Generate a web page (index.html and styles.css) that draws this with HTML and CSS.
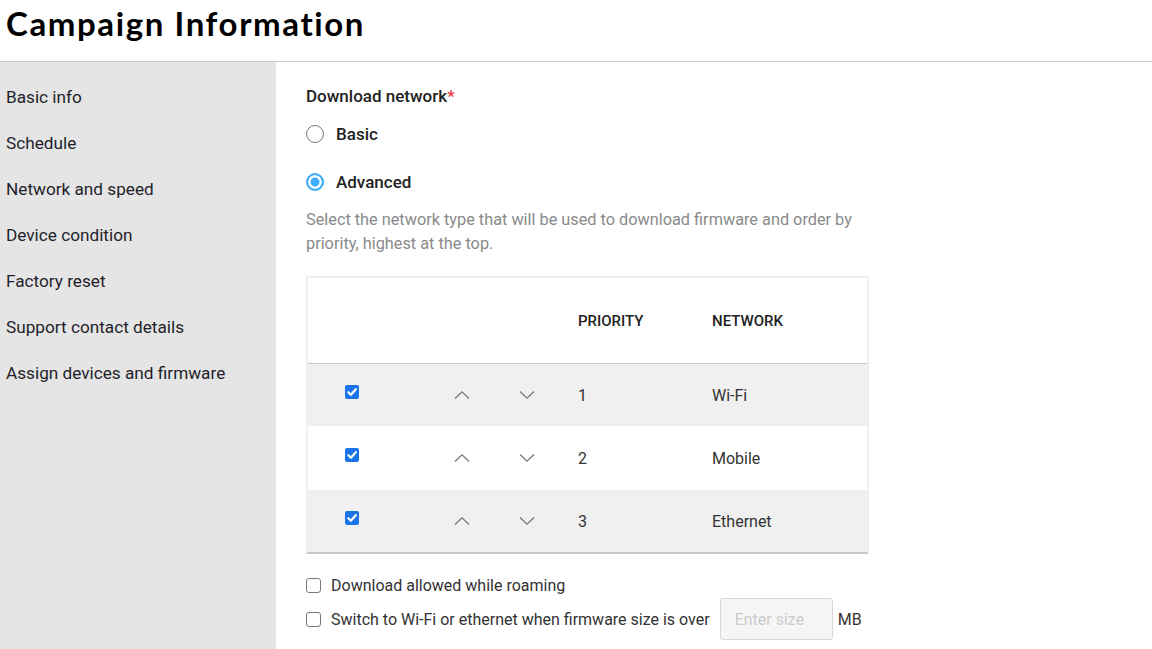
FILE: index.html
```html
<!DOCTYPE html>
<html lang="en">
<head>
<meta charset="utf-8">
<title>Campaign Information</title>
<link rel="stylesheet" href="styles.css">
</head>
<body>
<header class="page-header">
  <h1 class="page-title">Campaign Information</h1>
</header>
<div class="layout">
  <nav class="sidebar">
    <ul class="nav-list">
      <li class="nav-item">Basic info</li>
      <li class="nav-item">Schedule</li>
      <li class="nav-item">Network and speed</li>
      <li class="nav-item">Device condition</li>
      <li class="nav-item">Factory reset</li>
      <li class="nav-item">Support contact details</li>
      <li class="nav-item">Assign devices and firmware</li>
    </ul>
  </nav>
  <main class="content">
    <div class="field-label">Download network<span class="required">*</span></div>
    <div class="radio-group">
      <label class="radio-row"><span class="radio"></span><span class="radio-text">Basic</span></label>
      <label class="radio-row"><span class="radio radio-checked"></span><span class="radio-text">Advanced</span></label>
    </div>
    <p class="description">Select the network type that will be used to download firmware and order by priority, highest at the top.</p>

    <div class="net-table">
      <div class="net-row net-head">
        <div class="cell cell-check"></div>
        <div class="cell cell-arrows"></div>
        <div class="cell cell-priority">PRIORITY</div>
        <div class="cell cell-network">NETWORK</div>
      </div>
      <div class="net-row row-grey">
        <div class="cell cell-check"><span class="cb-on"><svg viewBox="0 0 14 14" width="14" height="14"><path d="M3.3 7.2 L5.9 9.8 L10.8 4.2" fill="none" stroke="#fff" stroke-width="2.2" stroke-linecap="round" stroke-linejoin="round"/></svg></span></div>
        <div class="cell cell-arrows">
          <svg class="arrow" viewBox="0 0 16 10" width="16" height="10"><path d="M1 8.5 L8 1.8 L15 8.5" fill="none" stroke="#777" stroke-width="1.3"/></svg>
          <svg class="arrow" viewBox="0 0 16 10" width="16" height="10"><path d="M1 1.5 L8 8.2 L15 1.5" fill="none" stroke="#777" stroke-width="1.3"/></svg>
        </div>
        <div class="cell cell-priority num">1</div>
        <div class="cell cell-network">Wi-Fi</div>
      </div>
      <div class="net-row row-white">
        <div class="cell cell-check"><span class="cb-on"><svg viewBox="0 0 14 14" width="14" height="14"><path d="M3.3 7.2 L5.9 9.8 L10.8 4.2" fill="none" stroke="#fff" stroke-width="2.2" stroke-linecap="round" stroke-linejoin="round"/></svg></span></div>
        <div class="cell cell-arrows">
          <svg class="arrow" viewBox="0 0 16 10" width="16" height="10"><path d="M1 8.5 L8 1.8 L15 8.5" fill="none" stroke="#777" stroke-width="1.3"/></svg>
          <svg class="arrow" viewBox="0 0 16 10" width="16" height="10"><path d="M1 1.5 L8 8.2 L15 1.5" fill="none" stroke="#777" stroke-width="1.3"/></svg>
        </div>
        <div class="cell cell-priority num">2</div>
        <div class="cell cell-network">Mobile</div>
      </div>
      <div class="net-row row-grey">
        <div class="cell cell-check"><span class="cb-on"><svg viewBox="0 0 14 14" width="14" height="14"><path d="M3.3 7.2 L5.9 9.8 L10.8 4.2" fill="none" stroke="#fff" stroke-width="2.2" stroke-linecap="round" stroke-linejoin="round"/></svg></span></div>
        <div class="cell cell-arrows">
          <svg class="arrow" viewBox="0 0 16 10" width="16" height="10"><path d="M1 8.5 L8 1.8 L15 8.5" fill="none" stroke="#777" stroke-width="1.3"/></svg>
          <svg class="arrow" viewBox="0 0 16 10" width="16" height="10"><path d="M1 1.5 L8 8.2 L15 1.5" fill="none" stroke="#777" stroke-width="1.3"/></svg>
        </div>
        <div class="cell cell-priority num">3</div>
        <div class="cell cell-network">Ethernet</div>
      </div>
    </div>

    <div class="options">
      <label class="option-row"><span class="cb-off"></span><span>Download allowed while roaming</span></label>
      <label class="option-row"><span class="cb-off"></span><span>Switch to Wi-Fi or ethernet when firmware size is over</span><span class="size-input">Enter size</span><span class="unit">MB</span></label>
    </div>
  </main>
</div>
</body>
</html>
```

FILE: styles.css
```css
* { box-sizing: border-box; }
html, body { margin: 0; padding: 0; }
body {
  font-family: Roboto, "Liberation Sans", sans-serif;
  color: #222;
  background: #fff;
  width: 1152px;
  height: 649px;
  overflow: hidden;
}
.page-header {
  height: 62px;
  border-bottom: 1px solid #c8c8c8;
  padding: 0 0 0 6px;
  display: flex;
  align-items: center;
}
.page-title {
  margin: 0;
  font-family: Lato, "Liberation Sans", sans-serif;
  font-weight: 700;
  font-size: 33px;
  color: #000;
  letter-spacing: 1.6px;
  position: relative;
  top: -8px;
}
.layout {
  display: flex;
  height: 587px;
}
.sidebar {
  width: 276px;
  background: #e5e5e5;
  flex: none;
}
.nav-list {
  list-style: none;
  margin: 0;
  padding: 12px 0 0 6px;
}
.nav-item {
  height: 46px;
  line-height: 46px;
  font-size: 17.2px;
  color: #1f1f2a;
}
.content {
  padding: 22px 0 0 30px;
  flex: 1;
}
.field-label {
  font-size: 17px;
  font-weight: 500;
  color: #222;
  line-height: 24px;
}
.required { color: #e8383c; }
.radio-group {
  display: flex;
  flex-direction: column;
  margin-top: 2px;
}
.radio-row {
  display: flex;
  align-items: center;
  height: 48px;
}
.radio {
  width: 18px;
  height: 18px;
  border: 1.5px solid #777;
  border-radius: 50%;
  margin-right: 12px;
  background: #fff;
}
.radio-checked {
  border: 2px solid #3daeff;
  box-shadow: inset 0 0 0 2.5px #fff;
  background: #3daeff;
}
.radio-text {
  font-size: 17px;
  font-weight: 500;
  color: #222;
}
.description {
  margin: 2px 0 0;
  width: 570px;
  font-size: 16.3px;
  line-height: 24px;
  color: #8a8a8a;
}
.net-table {
  margin-top: 20px;
  width: 563px;
  border: 2px solid #f0f0f0;
  border-bottom: 2px solid #c8c8c8;
}
.net-row {
  display: grid;
  grid-template-columns: 88px 182px 134px 1fr;
  align-items: center;
  font-size: 16px;
  color: #333;
}
.net-head {
  height: 86px;
  border-bottom: 1px solid #c8c8c8;
  font-size: 15px;
  font-weight: 500;
  color: #222;
  background: #fff;
}
.row-grey { background: #f0f0f0; height: 62px; }
.row-white { background: #fff; height: 64px; }
.cell { display: flex; align-items: center; }
.cell-check { justify-content: center; margin-top: -6px; }
.cell-arrows { padding-left: 58px; gap: 49px; }
.arrow { display: block; }
.cb-on {
  width: 14px;
  height: 14px;
  border-radius: 2px;
  background: #1a73e8;
  display: block;
}
.cb-on svg { display: block; }
.options {
  margin-top: 20px;
  display: flex;
  flex-direction: column;
}
.option-row {
  display: flex;
  align-items: center;
  font-size: 16px;
  color: #333;
}
.option-row:first-child { height: 22px; margin-bottom: 2px; }
.option-row:last-child { height: 42px; }
.cb-off {
  width: 15px;
  height: 15px;
  border: 1px solid #777;
  border-radius: 3px;
  background: #fff;
  margin-right: 10px;
  flex: none;
}
.size-input {
  width: 113px;
  height: 42px;
  margin-left: 10px;
  border: 1px solid #d8d8d8;
  border-radius: 3px;
  background: #f5f5f5;
  color: #ccc;
  display: flex;
  align-items: center;
  padding-left: 14px;
}
.unit { margin-left: 5px; }
```
